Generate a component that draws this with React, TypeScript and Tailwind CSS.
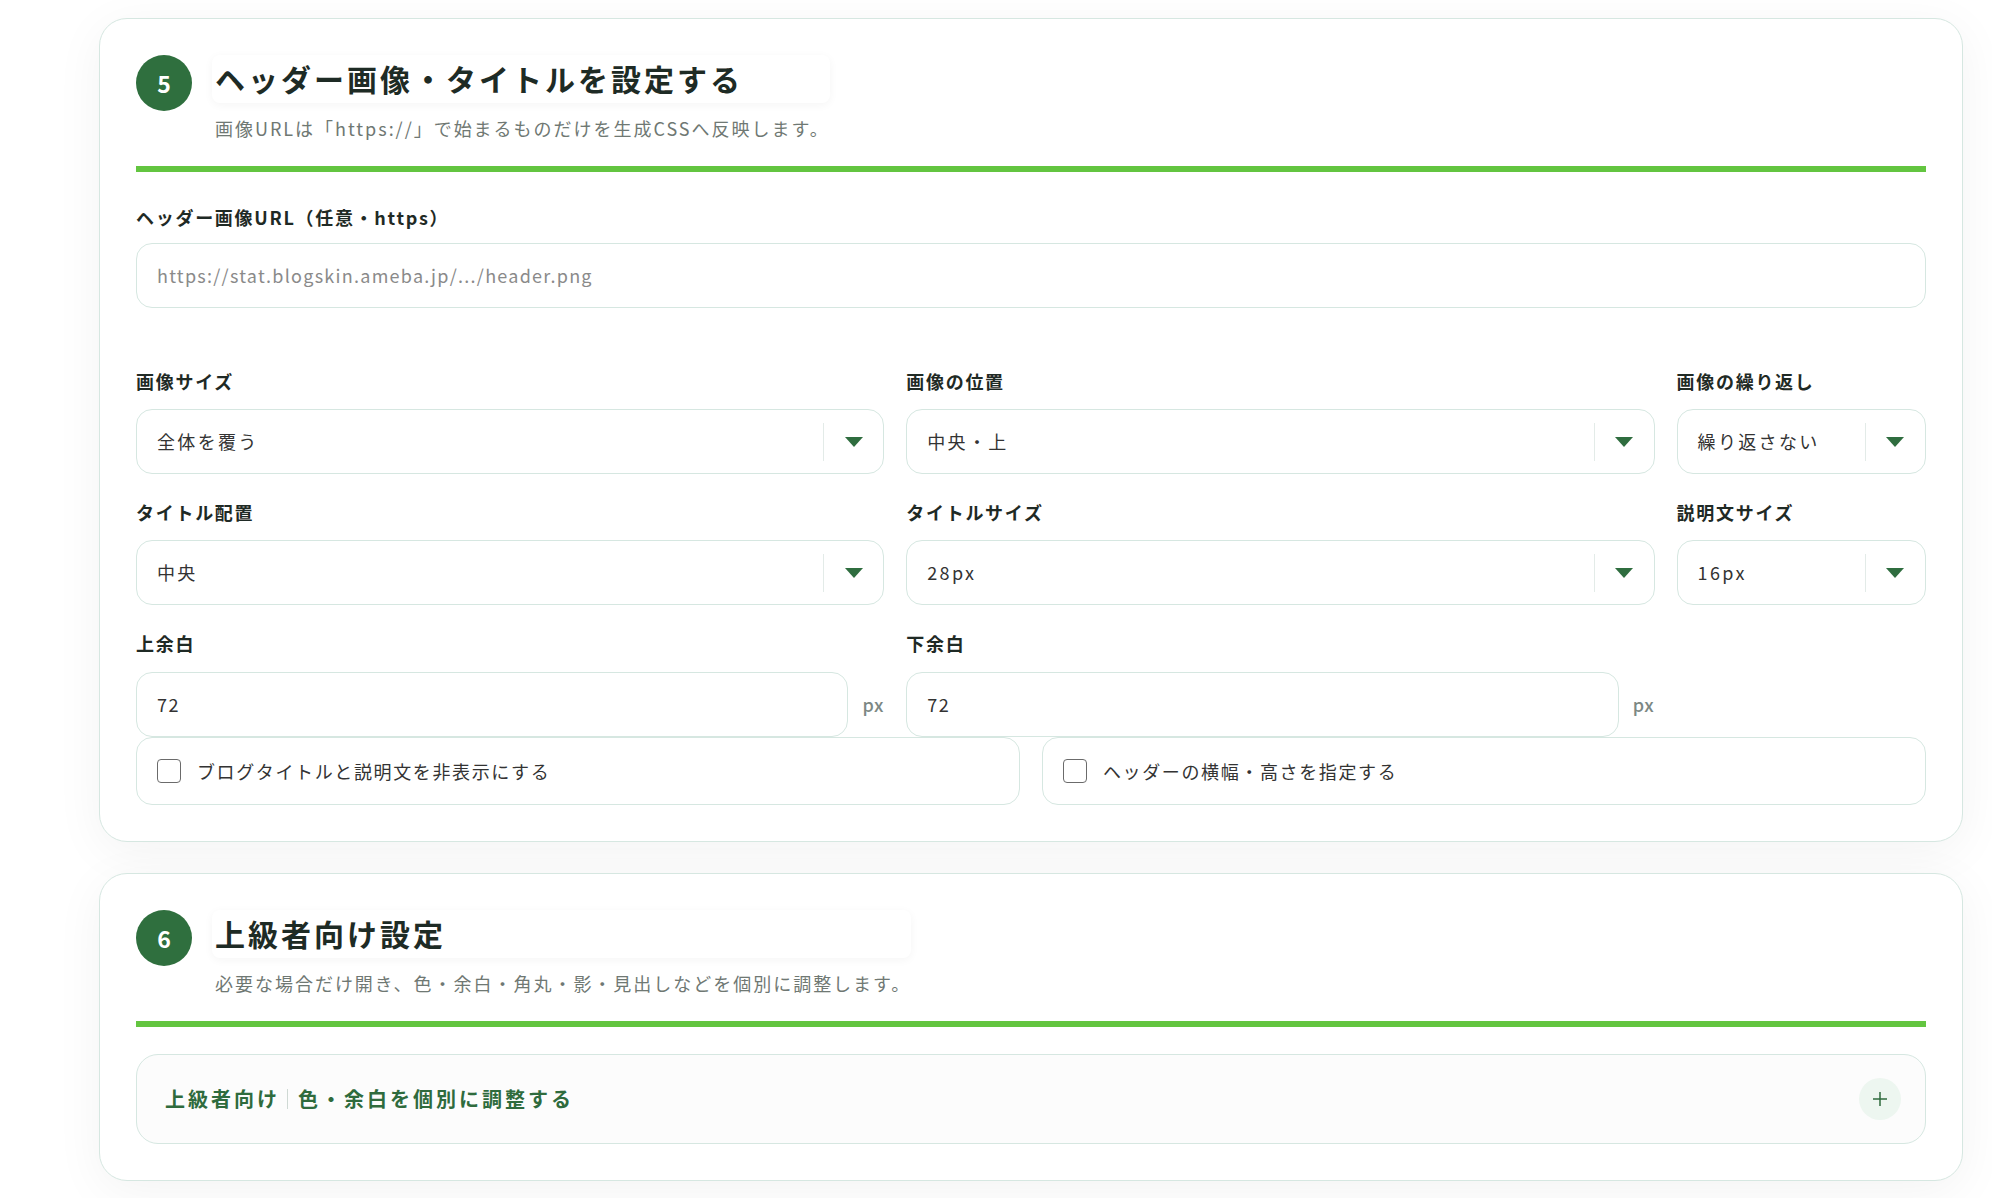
import React from "react"

const FONT = '"Noto Sans CJK JP", "Noto Sans", sans-serif'

function Caret() {
  return (
    <svg width="18" height="10" viewBox="0 0 18 10" className="block">
      <polygon points="0,0 18,0 9,10" fill="#2f6d3f" />
    </svg>
  )
}

function SectionHeader({ num, title, desc }: { num: string; title: string; desc: string }) {
  return (
    <div>
      <div className="flex items-start gap-5">
        <div className="w-14 h-14 shrink-0 rounded-full bg-[#2f6f3e] text-white text-[23px] font-semibold flex items-center justify-center">
          {num}
        </div>
        <div className="inline-flex flex-col">
          <h2 className="h-12 flex items-center px-[3px] pb-[3px] bg-white rounded-lg shadow-[0_2px_10px_rgba(0,0,0,0.045)] text-[30px] font-bold tracking-[0.1em] text-[#1e2b25] leading-none">
            {title}
          </h2>
          <p className="mt-3 pl-[3px] text-[18px] leading-[27px] tracking-[0.11em] text-[#6f7873]">{desc}</p>
        </div>
      </div>
      <div className="mt-6 h-[6px] bg-[#63c540]" />
    </div>
  )
}

function Label({ children }: { children: React.ReactNode }) {
  return <div className="text-[18px] leading-[27px] font-bold tracking-[0.095em] text-[#1f2a25]">{children}</div>
}

function Select({ label, value }: { label: string; value: string }) {
  return (
    <div className="flex flex-col gap-[14px]">
      <Label>{label}</Label>
      <div className="h-[65px] rounded-2xl border border-[#d6e7e1] bg-white flex items-center">
        <span className="flex-1 pl-5 text-[18px] tracking-[0.13em] text-[#333]">{value}</span>
        <div className="w-px h-[38px] bg-[#e3ebe8]" />
        <div className="w-[59px] flex items-center justify-center">
          <Caret />
        </div>
      </div>
    </div>
  )
}

function NumberField({ label, value }: { label: string; value: string }) {
  return (
    <div className="flex flex-col gap-[15px]">
      <Label>{label}</Label>
      <div className="flex items-center gap-[14px]">
        <div className="flex-1 h-[65px] rounded-2xl border border-[#d6e7e1] bg-white flex items-center pl-5 text-[18px] tracking-[0.08em] text-[#333]">
          {value}
        </div>
        <span className="text-[18px] font-medium tracking-[0.04em] text-[#7c8884]">px</span>
      </div>
    </div>
  )
}

function CheckRow({ text }: { text: string }) {
  return (
    <label className="h-[68px] rounded-2xl border border-[#d6e7e1] bg-white flex items-center gap-4 px-5">
      <span className="w-6 h-6 rounded-[4px] border-[1.5px] border-[#6b6b6b] bg-white" />
      <span className="text-[18px] tracking-[0.09em] text-[#333]">{text}</span>
    </label>
  )
}

export default function App() {
  return (
    <div className="min-h-screen bg-white pt-[18px] pb-4" style={{ fontFamily: FONT }}>
      <div className="ml-[99px] w-[1864px] flex flex-col gap-[31px]">
        {/* Section 5 */}
        <section className="rounded-[28px] border border-[#d6e7e1] bg-white p-9 shadow-[0_10px_50px_rgba(0,0,0,0.05)]">
          <SectionHeader
            num="5"
            title="ヘッダー画像・タイトルを設定する"
            desc="画像URLは「https://」で始まるものだけを生成CSSへ反映します。"
          />

          <div className="mt-8 flex flex-col gap-3">
            <Label>ヘッダー画像URL（任意・https）</Label>
            <div className="h-[65px] rounded-2xl border border-[#d6e7e1] bg-white flex items-center pl-5 text-[18px] tracking-[0.07em] text-[#8a8a8a]">
              https://stat.blogskin.ameba.jp/.../header.png
            </div>
          </div>

          <div className="mt-[60px] grid grid-cols-[3fr_3fr_1fr] gap-x-[22px] gap-y-[25px]">
            <Select label="画像サイズ" value="全体を覆う" />
            <Select label="画像の位置" value="中央・上" />
            <Select label="画像の繰り返し" value="繰り返さない" />
            <Select label="タイトル配置" value="中央" />
            <Select label="タイトルサイズ" value="28px" />
            <Select label="説明文サイズ" value="16px" />
            <NumberField label="上余白" value="72" />
            <NumberField label="下余白" value="72" />
          </div>

          <div className="grid grid-cols-2 gap-x-[22px]">
            <CheckRow text="ブログタイトルと説明文を非表示にする" />
            <CheckRow text="ヘッダーの横幅・高さを指定する" />
          </div>
        </section>

        {/* Section 6 */}
        <section className="rounded-[28px] border border-[#d6e7e1] bg-white p-9 shadow-[0_10px_50px_rgba(0,0,0,0.05)]">
          <SectionHeader
            num="6"
            title="上級者向け設定"
            desc="必要な場合だけ開き、色・余白・角丸・影・見出しなどを個別に調整します。"
          />
          <div className="mt-[27px] h-[90px] rounded-[22px] border border-[#d6e7e1] bg-[#fcfcfc] flex items-center pl-7 pr-6">
            <div className="flex-1 flex items-center text-[20px] font-bold tracking-[0.15em] text-[#2f6b3d]">
              <span>上級者向け</span>
              <span className="ml-[7px] mr-[10px] w-px h-5 bg-[#cfd9d4]" />
              <span>色・余白を個別に調整する</span>
            </div>
            <div className="w-[42px] h-[42px] rounded-full bg-[#edf6f0] flex items-center justify-center">
              <svg width="14" height="14" viewBox="0 0 14 14">
                <path d="M7 0v14M0 7h14" stroke="#2f6b3d" strokeWidth="1.5" />
              </svg>
            </div>
          </div>
        </section>
      </div>
    </div>
  )
}
